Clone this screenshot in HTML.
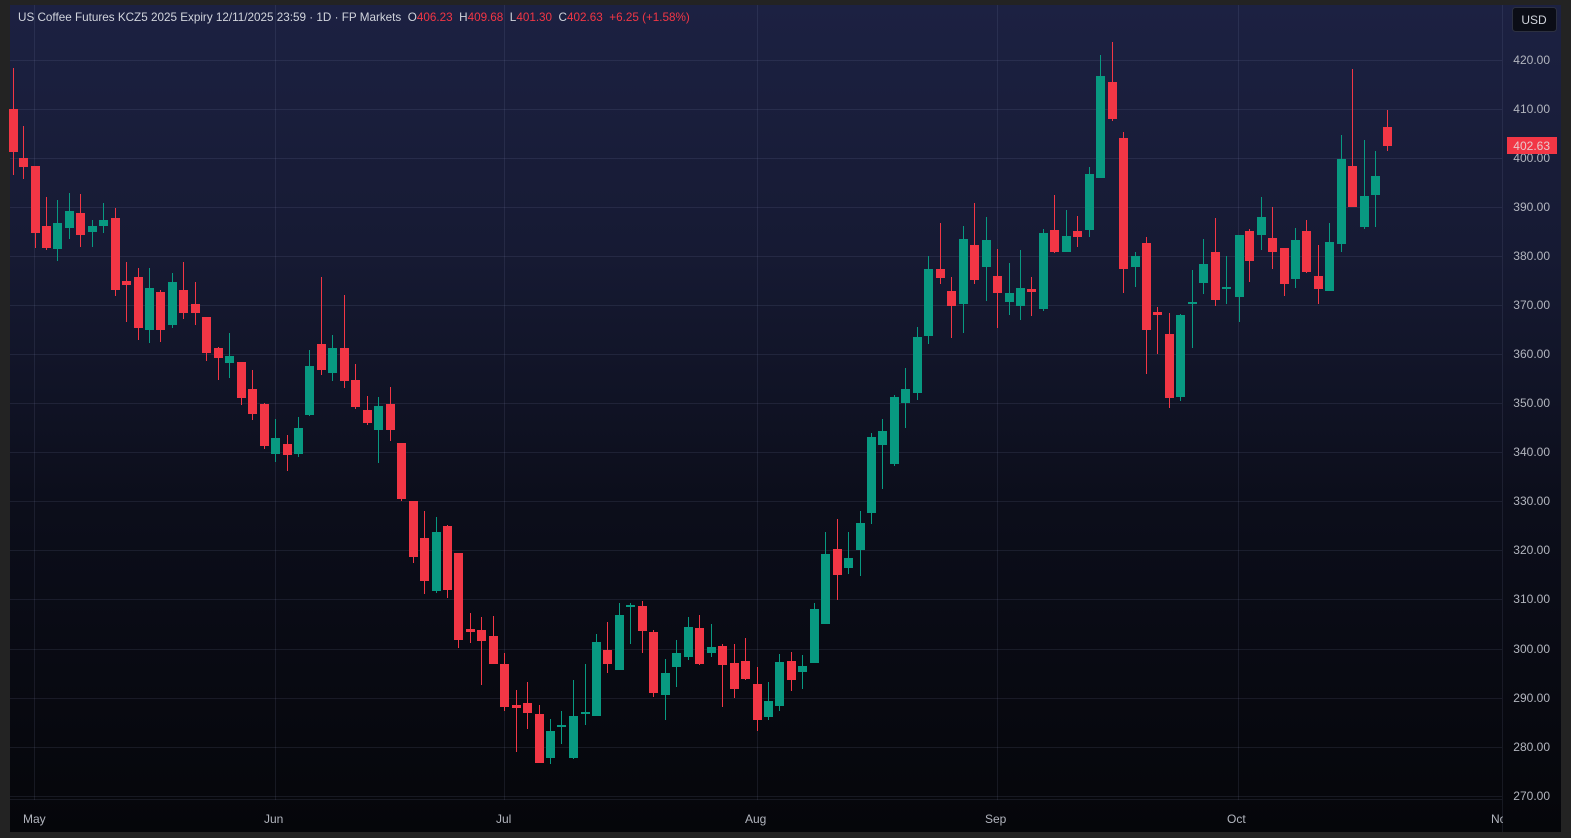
<!DOCTYPE html>
<html><head><meta charset="utf-8"><style>
html,body{margin:0;padding:0;background:#232323;width:1571px;height:838px;overflow:hidden}
svg{display:block}
text{font-family:"Liberation Sans",sans-serif}
.r{fill:#f23645}.g{fill:#089981}
.gl{stroke:rgba(150,160,200,0.12);stroke-width:1}
.pl{fill:#b2b5be;font-size:12px;text-anchor:end}
.ml{fill:#b2b5be;font-size:12px}
</style></head><body>
<svg width="1571" height="838" viewBox="0 0 1571 838" xmlns="http://www.w3.org/2000/svg">
<defs><linearGradient id="bg" x1="0" y1="0" x2="0" y2="1">
<stop offset="0" stop-color="#1c2142"/><stop offset="0.3" stop-color="#161a33"/><stop offset="0.6" stop-color="#0c0e1b"/><stop offset="1" stop-color="#05060a"/></linearGradient></defs>
<rect x="0" y="0" width="1571" height="838" fill="#232323"/>
<rect x="10" y="5" width="1551" height="827" fill="url(#bg)"/>
<g class="gl">
<line x1="10" x2="1502" y1="60.5" y2="60.5"/><line x1="10" x2="1502" y1="109.5" y2="109.5"/><line x1="10" x2="1502" y1="158.5" y2="158.5"/><line x1="10" x2="1502" y1="207.5" y2="207.5"/><line x1="10" x2="1502" y1="256.5" y2="256.5"/><line x1="10" x2="1502" y1="305.5" y2="305.5"/><line x1="10" x2="1502" y1="354.5" y2="354.5"/><line x1="10" x2="1502" y1="403.5" y2="403.5"/><line x1="10" x2="1502" y1="452.5" y2="452.5"/><line x1="10" x2="1502" y1="501.5" y2="501.5"/><line x1="10" x2="1502" y1="550.5" y2="550.5"/><line x1="10" x2="1502" y1="599.5" y2="599.5"/><line x1="10" x2="1502" y1="649.5" y2="649.5"/><line x1="10" x2="1502" y1="698.5" y2="698.5"/><line x1="10" x2="1502" y1="747.5" y2="747.5"/><line x1="10" x2="1502" y1="796.5" y2="796.5"/>
<line x1="34.5" x2="34.5" y1="5" y2="800"/><line x1="275.5" x2="275.5" y1="5" y2="800"/><line x1="504.5" x2="504.5" y1="5" y2="800"/><line x1="757.5" x2="757.5" y1="5" y2="800"/><line x1="997.5" x2="997.5" y1="5" y2="800"/><line x1="1238.5" x2="1238.5" y1="5" y2="800"/>
<line x1="1502.5" x2="1502.5" y1="5" y2="832"/><line x1="10" x2="1502" y1="799.5" y2="799.5"/>
</g>
<g class="r">
<rect x="13" y="68" width="1" height="107"/><rect x="9" y="109" width="9" height="43"/>
<rect x="23" y="126" width="1" height="53"/><rect x="19" y="158" width="9" height="9"/>
<rect x="35" y="166" width="1" height="82"/><rect x="31" y="166" width="9" height="67"/>
<rect x="46" y="197" width="1" height="53"/><rect x="42" y="226" width="9" height="22"/>
<rect x="80" y="194" width="1" height="53"/><rect x="76" y="213" width="9" height="22"/>
<rect x="115" y="208" width="1" height="88"/><rect x="111" y="218" width="9" height="72"/>
<rect x="126" y="262" width="1" height="60"/><rect x="122" y="281" width="9" height="4"/>
<rect x="138" y="268" width="1" height="72"/><rect x="134" y="277" width="9" height="51"/>
<rect x="160" y="290" width="1" height="52"/><rect x="156" y="292" width="9" height="38"/>
<rect x="183" y="262" width="1" height="57"/><rect x="179" y="290" width="9" height="23"/>
<rect x="195" y="282" width="1" height="43"/><rect x="191" y="304" width="9" height="9"/>
<rect x="206" y="317" width="1" height="44"/><rect x="202" y="317" width="9" height="36"/>
<rect x="218" y="347" width="1" height="33"/><rect x="214" y="348" width="9" height="10"/>
<rect x="241" y="362" width="1" height="43"/><rect x="237" y="362" width="9" height="36"/>
<rect x="252" y="370" width="1" height="50"/><rect x="248" y="389" width="9" height="25"/>
<rect x="264" y="403" width="1" height="46"/><rect x="260" y="404" width="9" height="42"/>
<rect x="287" y="435" width="1" height="36"/><rect x="283" y="444" width="9" height="11"/>
<rect x="321" y="277" width="1" height="98"/><rect x="317" y="344" width="9" height="26"/>
<rect x="344" y="295" width="1" height="93"/><rect x="340" y="348" width="9" height="33"/>
<rect x="355" y="364" width="1" height="45"/><rect x="351" y="380" width="9" height="27"/>
<rect x="367" y="396" width="1" height="29"/><rect x="363" y="410" width="9" height="13"/>
<rect x="390" y="387" width="1" height="54"/><rect x="386" y="404" width="9" height="26"/>
<rect x="401" y="443" width="1" height="58"/><rect x="397" y="443" width="9" height="56"/>
<rect x="413" y="501" width="1" height="62"/><rect x="409" y="501" width="9" height="56"/>
<rect x="424" y="511" width="1" height="83"/><rect x="420" y="538" width="9" height="43"/>
<rect x="447" y="525" width="1" height="73"/><rect x="443" y="526" width="9" height="64"/>
<rect x="458" y="553" width="1" height="95"/><rect x="454" y="553" width="9" height="87"/>
<rect x="470" y="613" width="1" height="30"/><rect x="466" y="629" width="9" height="3"/>
<rect x="481" y="617" width="1" height="68"/><rect x="477" y="630" width="9" height="11"/>
<rect x="493" y="616" width="1" height="48"/><rect x="489" y="636" width="9" height="28"/>
<rect x="504" y="653" width="1" height="58"/><rect x="500" y="664" width="9" height="43"/>
<rect x="516" y="690" width="1" height="62"/><rect x="512" y="705" width="9" height="3"/>
<rect x="527" y="682" width="1" height="47"/><rect x="523" y="703" width="9" height="10"/>
<rect x="539" y="705" width="1" height="58"/><rect x="535" y="714" width="9" height="49"/>
<rect x="607" y="622" width="1" height="51"/><rect x="603" y="650" width="9" height="14"/>
<rect x="642" y="601" width="1" height="52"/><rect x="638" y="606" width="9" height="25"/>
<rect x="653" y="630" width="1" height="67"/><rect x="649" y="632" width="9" height="61"/>
<rect x="699" y="615" width="1" height="50"/><rect x="695" y="628" width="9" height="36"/>
<rect x="722" y="644" width="1" height="63"/><rect x="718" y="646" width="9" height="19"/>
<rect x="734" y="644" width="1" height="54"/><rect x="730" y="663" width="9" height="26"/>
<rect x="745" y="638" width="1" height="42"/><rect x="741" y="661" width="9" height="18"/>
<rect x="757" y="667" width="1" height="64"/><rect x="753" y="684" width="9" height="36"/>
<rect x="791" y="652" width="1" height="39"/><rect x="787" y="661" width="9" height="19"/>
<rect x="837" y="519" width="1" height="81"/><rect x="833" y="549" width="9" height="26"/>
<rect x="940" y="223" width="1" height="61"/><rect x="936" y="269" width="9" height="9"/>
<rect x="951" y="277" width="1" height="61"/><rect x="947" y="291" width="9" height="15"/>
<rect x="974" y="203" width="1" height="81"/><rect x="970" y="245" width="9" height="35"/>
<rect x="997" y="249" width="1" height="79"/><rect x="993" y="276" width="9" height="17"/>
<rect x="1031" y="277" width="1" height="39"/><rect x="1027" y="289" width="9" height="3"/>
<rect x="1054" y="195" width="1" height="58"/><rect x="1050" y="230" width="9" height="22"/>
<rect x="1077" y="216" width="1" height="31"/><rect x="1073" y="231" width="9" height="6"/>
<rect x="1112" y="42" width="1" height="79"/><rect x="1108" y="82" width="9" height="37"/>
<rect x="1123" y="132" width="1" height="161"/><rect x="1119" y="138" width="9" height="131"/>
<rect x="1146" y="237" width="1" height="137"/><rect x="1142" y="243" width="9" height="87"/>
<rect x="1157" y="307" width="1" height="47"/><rect x="1153" y="312" width="9" height="3"/>
<rect x="1169" y="313" width="1" height="95"/><rect x="1165" y="334" width="9" height="64"/>
<rect x="1215" y="218" width="1" height="88"/><rect x="1211" y="252" width="9" height="48"/>
<rect x="1249" y="229" width="1" height="53"/><rect x="1245" y="231" width="9" height="30"/>
<rect x="1272" y="207" width="1" height="62"/><rect x="1268" y="238" width="9" height="14"/>
<rect x="1284" y="248" width="1" height="48"/><rect x="1280" y="248" width="9" height="36"/>
<rect x="1306" y="220" width="1" height="53"/><rect x="1302" y="231" width="9" height="41"/>
<rect x="1318" y="245" width="1" height="59"/><rect x="1314" y="276" width="9" height="13"/>
<rect x="1352" y="69" width="1" height="138"/><rect x="1348" y="166" width="9" height="41"/>
<rect x="1387" y="110" width="1" height="41"/><rect x="1383" y="127" width="9" height="19"/>
</g>
<g class="g">
<rect x="57" y="200" width="1" height="61"/><rect x="53" y="223" width="9" height="26"/>
<rect x="69" y="193" width="1" height="46"/><rect x="65" y="211" width="9" height="17"/>
<rect x="92" y="220" width="1" height="27"/><rect x="88" y="226" width="9" height="6"/>
<rect x="103" y="203" width="1" height="30"/><rect x="99" y="220" width="9" height="6"/>
<rect x="149" y="268" width="1" height="75"/><rect x="145" y="288" width="9" height="42"/>
<rect x="172" y="273" width="1" height="55"/><rect x="168" y="282" width="9" height="43"/>
<rect x="229" y="333" width="1" height="45"/><rect x="225" y="356" width="9" height="7"/>
<rect x="275" y="419" width="1" height="43"/><rect x="271" y="438" width="9" height="16"/>
<rect x="298" y="417" width="1" height="40"/><rect x="294" y="428" width="9" height="26"/>
<rect x="309" y="350" width="1" height="66"/><rect x="305" y="366" width="9" height="49"/>
<rect x="332" y="335" width="1" height="46"/><rect x="328" y="348" width="9" height="25"/>
<rect x="378" y="397" width="1" height="66"/><rect x="374" y="406" width="9" height="24"/>
<rect x="436" y="517" width="1" height="76"/><rect x="432" y="532" width="9" height="59"/>
<rect x="550" y="719" width="1" height="45"/><rect x="546" y="731" width="9" height="27"/>
<rect x="561" y="711" width="1" height="33"/><rect x="557" y="725" width="9" height="2"/>
<rect x="573" y="680" width="1" height="79"/><rect x="569" y="716" width="9" height="42"/>
<rect x="585" y="664" width="1" height="61"/><rect x="581" y="712" width="9" height="2"/>
<rect x="596" y="634" width="1" height="82"/><rect x="592" y="642" width="9" height="74"/>
<rect x="619" y="603" width="1" height="67"/><rect x="615" y="615" width="9" height="55"/>
<rect x="630" y="603" width="1" height="41"/><rect x="626" y="605" width="9" height="2"/>
<rect x="665" y="659" width="1" height="61"/><rect x="661" y="673" width="9" height="22"/>
<rect x="676" y="640" width="1" height="47"/><rect x="672" y="653" width="9" height="14"/>
<rect x="688" y="617" width="1" height="43"/><rect x="684" y="627" width="9" height="30"/>
<rect x="711" y="624" width="1" height="33"/><rect x="707" y="647" width="9" height="6"/>
<rect x="768" y="682" width="1" height="38"/><rect x="764" y="701" width="9" height="16"/>
<rect x="779" y="654" width="1" height="57"/><rect x="775" y="662" width="9" height="44"/>
<rect x="802" y="655" width="1" height="34"/><rect x="798" y="666" width="9" height="6"/>
<rect x="814" y="603" width="1" height="60"/><rect x="810" y="609" width="9" height="54"/>
<rect x="825" y="532" width="1" height="92"/><rect x="821" y="554" width="9" height="70"/>
<rect x="848" y="532" width="1" height="42"/><rect x="844" y="558" width="9" height="10"/>
<rect x="860" y="511" width="1" height="65"/><rect x="856" y="523" width="9" height="27"/>
<rect x="871" y="433" width="1" height="91"/><rect x="867" y="437" width="9" height="76"/>
<rect x="882" y="419" width="1" height="70"/><rect x="878" y="431" width="9" height="14"/>
<rect x="894" y="395" width="1" height="71"/><rect x="890" y="397" width="9" height="67"/>
<rect x="905" y="368" width="1" height="60"/><rect x="901" y="389" width="9" height="14"/>
<rect x="917" y="327" width="1" height="73"/><rect x="913" y="337" width="9" height="56"/>
<rect x="928" y="256" width="1" height="88"/><rect x="924" y="269" width="9" height="67"/>
<rect x="963" y="226" width="1" height="107"/><rect x="959" y="239" width="9" height="65"/>
<rect x="986" y="217" width="1" height="84"/><rect x="982" y="240" width="9" height="27"/>
<rect x="1009" y="263" width="1" height="52"/><rect x="1005" y="293" width="9" height="9"/>
<rect x="1020" y="250" width="1" height="70"/><rect x="1016" y="288" width="9" height="18"/>
<rect x="1043" y="229" width="1" height="82"/><rect x="1039" y="233" width="9" height="76"/>
<rect x="1066" y="210" width="1" height="42"/><rect x="1062" y="236" width="9" height="16"/>
<rect x="1089" y="167" width="1" height="70"/><rect x="1085" y="174" width="9" height="56"/>
<rect x="1100" y="55" width="1" height="123"/><rect x="1096" y="76" width="9" height="102"/>
<rect x="1135" y="252" width="1" height="35"/><rect x="1131" y="256" width="9" height="11"/>
<rect x="1180" y="314" width="1" height="87"/><rect x="1176" y="315" width="9" height="82"/>
<rect x="1192" y="270" width="1" height="78"/><rect x="1188" y="302" width="9" height="2"/>
<rect x="1203" y="239" width="1" height="55"/><rect x="1199" y="264" width="9" height="19"/>
<rect x="1226" y="256" width="1" height="48"/><rect x="1222" y="287" width="9" height="2"/>
<rect x="1239" y="235" width="1" height="87"/><rect x="1235" y="235" width="9" height="62"/>
<rect x="1261" y="197" width="1" height="53"/><rect x="1257" y="217" width="9" height="18"/>
<rect x="1295" y="228" width="1" height="60"/><rect x="1291" y="240" width="9" height="39"/>
<rect x="1329" y="223" width="1" height="68"/><rect x="1325" y="242" width="9" height="49"/>
<rect x="1341" y="135" width="1" height="117"/><rect x="1337" y="159" width="9" height="85"/>
<rect x="1364" y="140" width="1" height="89"/><rect x="1360" y="196" width="9" height="31"/>
<rect x="1375" y="151" width="1" height="76"/><rect x="1371" y="176" width="9" height="19"/>
</g>
<g>
<text class="pl" x="1550" y="64">420.00</text><text class="pl" x="1550" y="113">410.00</text><text class="pl" x="1550" y="162">400.00</text><text class="pl" x="1550" y="211">390.00</text><text class="pl" x="1550" y="260">380.00</text><text class="pl" x="1550" y="309">370.00</text><text class="pl" x="1550" y="358">360.00</text><text class="pl" x="1550" y="407">350.00</text><text class="pl" x="1550" y="456">340.00</text><text class="pl" x="1550" y="505">330.00</text><text class="pl" x="1550" y="554">320.00</text><text class="pl" x="1550" y="603">310.00</text><text class="pl" x="1550" y="653">300.00</text><text class="pl" x="1550" y="702">290.00</text><text class="pl" x="1550" y="751">280.00</text><text class="pl" x="1550" y="800">270.00</text>
</g>
<rect x="1507" y="137" width="50" height="17" fill="#f23645"/>
<text x="1550" y="150" style="fill:#e8c8cc;font-size:12px;text-anchor:end">402.63</text>
<rect x="1512.5" y="7.5" width="44" height="24" rx="3" fill="#0b0d16" stroke="#2c3040"/>
<text x="1534" y="24" style="fill:#d1d4dc;font-size:12px;text-anchor:middle">USD</text>
<g>
<text class="ml" x="23" y="823">May</text><text class="ml" x="264" y="823">Jun</text><text class="ml" x="496" y="823">Jul</text><text class="ml" x="745" y="823">Aug</text><text class="ml" x="985" y="823">Sep</text><text class="ml" x="1227" y="823">Oct</text>
<svg x="1480" y="805" width="23" height="25"><text class="ml" x="11" y="18">Nov</text></svg>
</g>
<text x="18" y="21" style="font-size:11.7px;fill:#d1d4dc">US Coffee Futures KCZ5 2025 Expiry 12/11/2025 23:59 · 1D · FP Markets&#160;&#160;O<tspan fill="#f23645">406.23</tspan>&#160;&#160;H<tspan fill="#f23645">409.68</tspan>&#160;&#160;L<tspan fill="#f23645">401.30</tspan>&#160;&#160;C<tspan fill="#f23645">402.63</tspan>&#160;&#160;<tspan fill="#f23645">+6.25 (+1.58%)</tspan></text>
</svg>
</body></html>
